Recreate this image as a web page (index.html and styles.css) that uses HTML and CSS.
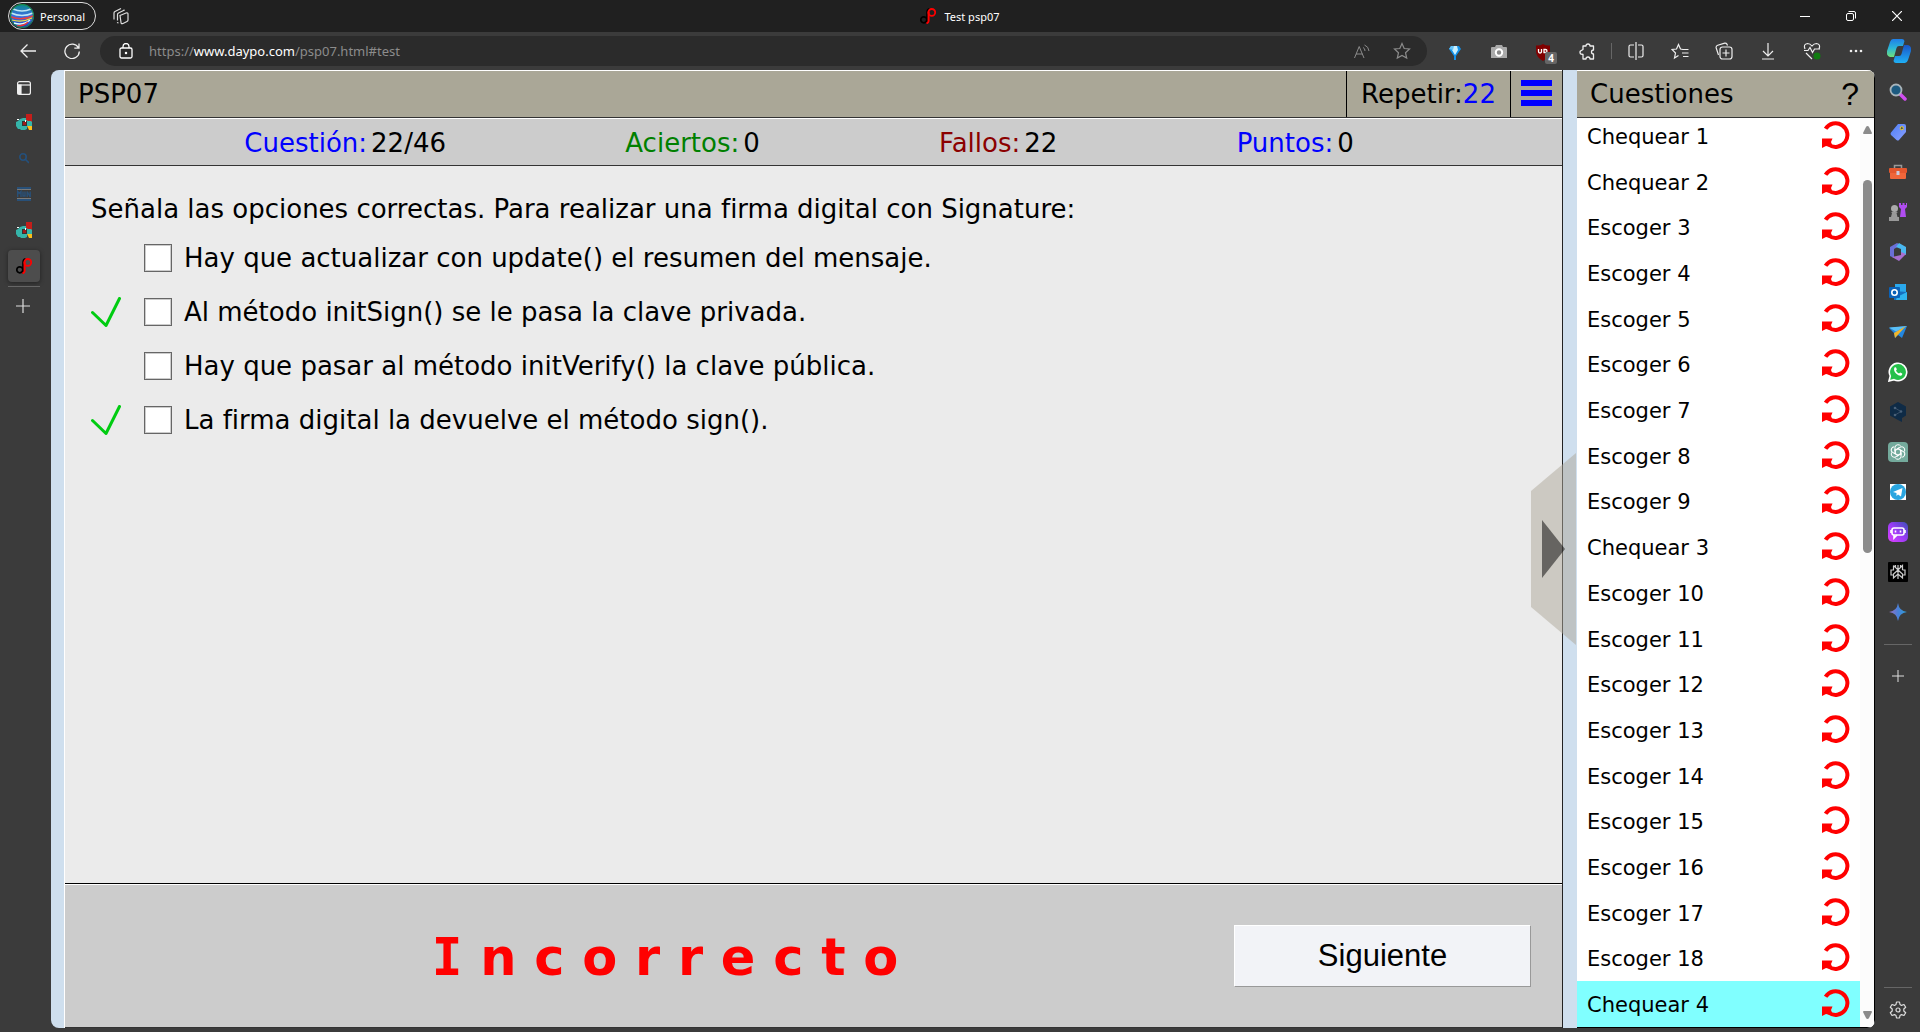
FILE: index.html
```html
<!DOCTYPE html>
<html lang="es">
<head>
<meta charset="utf-8">
<meta name="viewport" content="width=device-width, initial-scale=1">
<title>Test psp07</title>
<link rel="stylesheet" href="styles.css">
</head>
<body>
<svg class="defs" aria-hidden="true">
  <defs>
    <linearGradient id="avatar" x1="0" y1="0" x2="0" y2="1"><stop offset="0" stop-color="#0a8a8c"/><stop offset=".5" stop-color="#3c6fe0"/><stop offset="1" stop-color="#1c3cb8"/></linearGradient>
    <linearGradient id="cop1" x1="0" y1="0" x2="0" y2="1"><stop offset="0" stop-color="#1f7fe8"/><stop offset=".5" stop-color="#2bb6d8"/><stop offset="1" stop-color="#6fe07a"/></linearGradient>
    <linearGradient id="cop2" x1="0" y1="0" x2="0" y2="1"><stop offset="0" stop-color="#1a55c8"/><stop offset="1" stop-color="#1fb0f5"/></linearGradient>
    <linearGradient id="violet" x1="0" y1="1" x2="1" y2="0"><stop offset="0" stop-color="#e040ff"/><stop offset=".5" stop-color="#9a3cf5"/><stop offset="1" stop-color="#3a4fb8"/></linearGradient>
    <linearGradient id="tag" x1="0" y1="0" x2="1" y2="1"><stop offset="0" stop-color="#4f7ff5"/><stop offset="1" stop-color="#8aa0ff"/></linearGradient>
    <linearGradient id="gem" x1="0" y1="0" x2="1" y2="0"><stop offset="0" stop-color="#9a6fc0"/><stop offset=".5" stop-color="#4a80d8"/><stop offset="1" stop-color="#2aa0d8"/></linearGradient>
    <symbol id="redo" viewBox="0 0 28 28"><path d="M3.6 7.8A11.8 11.8 0 1 1 6.5 23.5" fill="none" stroke="#f00" stroke-width="4"/><path d="M0 17.500h10.500l-1.500 3.500 1.500 4-4 .5-2.500-.5-4 2z" fill="#f00"/></symbol>
    <symbol id="tick" viewBox="0 0 30 30"><path d="M1.5 15.5L15 28.5 28.5 1.5" fill="none" stroke="#0c1" stroke-width="3" stroke-linecap="round" stroke-linejoin="round"/></symbol>
    <symbol id="dp" viewBox="0 0 16 16"><circle cx="3.800" cy="11.800" r="3" fill="none" stroke="#000" stroke-width="1.700"/><path d="M7 15.500V4.500q0-3 2.500-3.700" fill="none" stroke="#000" stroke-width="1.600"/><circle cx="11.800" cy="4.400" r="3.400" fill="none" stroke="#f00" stroke-width="1.800"/><path d="M8.600 3.500V13q-.2 2-2.200 2.300" fill="none" stroke="#f00" stroke-width="2"/></symbol>
    <symbol id="cloud" viewBox="0 0 16 16"><path d="M10 0h6v8h-6z" fill="#c41e1a"/><path d="M11 12h5v4h-3z" fill="#fbbf1a"/><path d="M4 5l3-1h3v2h4l2 2v4h-5v3l-2 1H5l-1-1H2l-2-3V8l2-1z" fill="#35b5aa"/><path d="M10 0h6v7h-4l-2-1z" fill="#c41e1a"/><path d="M6 7h5v5H6z" fill="#333"/><path d="M7 8h3v3H7z" fill="#a01c1a"/><path d="M1 5h2v1H1zM9 6h1v2H9z" fill="#fff"/></symbol>
    <symbol id="plus" viewBox="0 0 14 14"><path d="M7 0v14M0 7h14" stroke="#ddd" stroke-width="1.2"/></symbol>
  </defs>
</svg>

<header class="titlebar">
  <button class="profile"><svg width="24" height="24" viewBox="0 0 24 24"><circle cx="12" cy="12" r="12" fill="url(#avatar)"/><g fill="none"><path d="M3 5q9 4 18 0M1 9q11 5 22 0" stroke="#bfe8f5" stroke-width="1.4"/><path d="M1 13q11 4 22-1" stroke="#e84040" stroke-width="1.5"/><path d="M2 16q10 3 20-2" stroke="#f0e040" stroke-width="1.3"/><path d="M4 19q9 3 16-3" stroke="#dff" stroke-width="1.4"/><path d="M7 22q7 0 11-4" stroke="#e33" stroke-width="1.3"/></g><circle cx="12" cy="12" r="11.5" fill="none" stroke="#178a3a"/></svg><span>Personal</span></button>
  <button class="icon workspaces" aria-label="Áreas de trabajo"><svg width="18" height="18" viewBox="0 0 18 18" fill="none" stroke="#ddd" stroke-width="1.2"><path d="M8 8.5l6-2.5q2-.5 2 1v6q0 1-1 1.5l-4 2q-2 .7-2-1z"/><path d="M5.5 13.500V7.500q0-1 1-1.500l6-3M5 15.500l1.500.5M2 12.500V6q0-1 1-1.500L9 1.500M12 4V2.500"/></svg></button>
  <div class="window-title"><svg width="16" height="16"><use href="#dp"/></svg><span>Test psp07</span></div>
  <div class="window-buttons">
    <button class="icon" aria-label="Minimizar"><svg width="10" height="10"><path d="M0 5.500h10" stroke="#fff"/></svg></button>
    <button class="icon" aria-label="Restaurar"><svg width="10" height="10" viewBox="0 0 10 10" fill="none" stroke="#fff"><rect x=".5" y="2.500" width="7" height="7" rx="1.500"/><path d="M2.500.5H8q1.500 0 1.500 1.500v5.500"/></svg></button>
    <button class="icon" aria-label="Cerrar"><svg width="10" height="10"><path d="M0 0l10 10M10 0L0 10" stroke="#fff" stroke-width="1.200"/></svg></button>
  </div>
</header>

<nav class="toolbar" aria-label="Navegador">
  <button class="icon back" aria-label="Atrás"><svg width="16" height="14" viewBox="0 0 16 14" fill="none" stroke="#eee" stroke-width="1.300"><path d="M7.500.5L1 7l6.500 6.500M1 7h15"/></svg></button>
  <button class="icon reload" aria-label="Actualizar"><svg width="16" height="16" viewBox="0 0 16 16" fill="none" stroke="#eee" stroke-width="1.300"><path d="M14.500 5A7.200 7.200 0 1 0 15.300 8.500M15 .5V5.200h-4.700"/></svg></button>
  <div class="address">
    <svg width="14" height="16" viewBox="0 0 14 16" fill="none" stroke="#fff" stroke-width="1.300"><rect x="1" y="5" width="12" height="10" rx="1.500"/><path d="M4 5V3.500a3 3 0 0 1 6 0V5"/><circle cx="7" cy="10" r=".6" fill="#fff"/></svg>
    <a class="url" href="#test">https://<b>www.daypo.com</b>/psp07.html#test</a>
    <button class="icon" aria-label="Leer en voz alta"><svg width="16" height="15" viewBox="0 0 16 15" fill="none" stroke="#8c8c8c"><path d="M.5 14L5.200 2.500 10 14M2 10h6.500M9 3.500q2 .8 2 3.500M10.500 1q4 1.500 4.500 6"/></svg></button>
    <button class="icon" aria-label="Favorito"><svg width="18" height="18" viewBox="0 0 18 18" fill="none" stroke="#8c8c8c" stroke-width="1.200"><path d="M9 1.500l2.200 5 5.300.5-4 3.700 1.200 5.400L9 13.400l-4.700 2.700 1.200-5.400L1.500 7l5.300-.5z"/></svg></button>
  </div>
  <div class="extensions">
    <button class="icon" aria-label="Extensión diamante"><svg width="12" height="15" viewBox="0 0 12 15"><path d="M2 1h8l2 3-5 7v4H5v-4L0 4z" fill="#1290e8"/><path d="M4 1h4l1 4-3 5-3-5z" fill="#c8f0ff"/><path d="M2 1h3L4 5 0 4z" fill="#65c4fa"/></svg></button>
    <button class="icon" aria-label="Captura"><svg width="16" height="14" viewBox="0 0 16 14"><path d="M1 2h3l1-2h6l1 2h3q1 0 1 1v10H0V3q0-1 1-1z" fill="#aaa"/><circle cx="8" cy="7.500" r="3.200" fill="#888" stroke="#fff" stroke-width="2"/></svg></button>
    <button class="icon badged" aria-label="Bloqueador"><svg width="16" height="17" viewBox="0 0 16 17"><path d="M8 0q3 2 7 1.500V7q0 6-7 10-7-4-7-10V1.500Q5 2 8 0z" fill="#800000"/><path d="M3.500 5v2.500q0 1.500 1.500 1.500t1.500-1.500V5M9 8.500v-3h1.500a1.500 1.500 0 0 1 0 3z" fill="none" stroke="#fff" stroke-width="1.300"/></svg><span class="badge">4</span></button>
    <button class="icon" aria-label="Extensiones"><svg width="16" height="18" viewBox="0 0 16 18" fill="none" stroke="#eee" stroke-width="1.300"><path d="M4 3h3q0-2 2-2t2 2h3.500v4q-2 0-2 2t2 2v5H11q0-2-2-2t-2 2H4v-4.500l-2.500-.7q-1-1.500 0-2.800L4 6.500z" stroke-linejoin="round"/></svg></button>
  </div>
  <div class="browser-tools">
    <button class="icon" aria-label="Pantalla dividida"><svg width="16" height="18" viewBox="0 0 16 18" fill="none" stroke="#eee" stroke-width="1.200"><path d="M6 3H2.500Q1 3 1 4.500v9Q1 15 2.500 15H6M10 3h3.500Q15 3 15 4.500v9q0 1.500-1.500 1.500H10M8 0v18"/></svg></button>
    <button class="icon" aria-label="Favoritos"><svg width="18" height="17" viewBox="0 0 18 17" fill="none" stroke="#eee" stroke-width="1.200"><path d="M12 6.500L9.500 6 7.500 1.500 5.500 6 1 6.500 4.500 10l-1 5 4-2.500M11 6.500h6.500M11 10h6.500M12 13.500h5.500"/></svg></button>
    <button class="icon" aria-label="Colecciones"><svg width="18" height="18" viewBox="0 0 18 18" fill="none" stroke="#eee" stroke-width="1.200"><rect x="5" y="5" width="12" height="12" rx="2.500"/><path d="M11 7.500v7M7.500 11h7M3.500 13L1.200 6q-.5-2 1.500-2.700l7-2.200q1.500-.3 2.200 1L12.500 3.500"/></svg></button>
    <button class="icon" aria-label="Descargas"><svg width="14" height="17" viewBox="0 0 14 17" fill="none" stroke="#eee" stroke-width="1.200"><path d="M7 0v13M2 8l5 5 5-5M1 16h12"/></svg></button>
    <button class="icon" aria-label="Rendimiento"><svg width="18" height="18" viewBox="0 0 18 18" fill="none" stroke="#eee" stroke-width="1.200"><path d="M2 7Q0 2 4.500 1.500 7 1.500 9 4q2-2.500 4.500-2.500Q18 2 16 7M1 8.500h4l2-3 2.500 5L11.500 7H17M3 11l6 6"/><circle cx="14" cy="14" r="3.500" fill="#107c10" stroke="none"/></svg></button>
    <button class="icon" aria-label="Más"><svg width="14" height="4"><g fill="#eee"><circle cx="2" cy="2" r="1.300"/><circle cx="7" cy="2" r="1.300"/><circle cx="12" cy="2" r="1.300"/></g></svg></button>
  </div>
  <button class="icon copilot" aria-label="Copilot"><svg width="24" height="24" viewBox="0 0 24 24"><path d="M6 0h9q2 0 2.500 2L16 7h-4q-2 0-2.500 2L7 18H3q-4-1-3-6L3 3q1-3 3-3z" fill="url(#cop1)"/><path d="M18 24H9q-2 0-2.500-2L8 17h4q2 0 2.500-2L17 6h4q4 1 3 6l-3 9q-1 3-3 3z" fill="url(#cop2)"/></svg></button>
</nav>

<div class="workspace">
  <nav class="tabs" aria-label="Pestañas">
    <button class="icon tab" aria-label="Panel de pestañas"><svg width="14" height="14" viewBox="0 0 14 14" fill="none" stroke="#eee" stroke-width="1.200"><rect x=".6" y=".6" width="12.800" height="12.800" rx="2"/><path d="M1 4h12"/><path d="M1 4h3v9H1z" fill="#eee"/></svg></button>
    <button class="icon tab" aria-label="Pestaña 1"><svg width="16" height="16"><use href="#cloud"/></svg></button>
    <button class="icon tab" aria-label="Pestaña 2"><svg width="10" height="11" fill="none" stroke="#24507c" stroke-width="1.600"><circle cx="4" cy="4" r="3.200"/><path d="M6.500 6.500L10 10"/></svg></button>
    <button class="icon tab" aria-label="Pestaña 3"><svg width="14" height="14" viewBox="0 0 14 14" fill="none"><path d="M0 2.500h14M0 11.500h14" stroke="#7a7a7a"/><path d="M0 1h14M0 13h14" stroke="#285078" stroke-width="2"/><path d="M.7 10V4.500l1.600 2L4 4.500V10M6 4.500V9h2V4.500M10.200 10V4.500l3 5.500V4.500" stroke="#285078" stroke-width="1.400"/></svg></button>
    <button class="icon tab" aria-label="Pestaña 4"><svg width="16" height="16"><use href="#cloud"/></svg></button>
    <button class="icon tab active" aria-label="Test psp07"><svg width="16" height="16"><use href="#dp"/></svg></button>
    <hr>
    <button class="icon new-tab" aria-label="Nueva pestaña"><svg width="14" height="14"><use href="#plus"/></svg></button>
  </nav>

  <div class="page">
    <main class="test">
      <div class="test-head">
        <h1>PSP07</h1>
        <button class="repeat">Repetir:<span>22</span></button>
        <button class="menu" aria-label="Menú"><i></i><i></i><i></i></button>
      </div>
      <div class="stats">
        <div class="blue">Cuestión:<b>22/46</b></div>
        <div class="green">Aciertos:<b>0</b></div>
        <div class="maroon">Fallos:<b>22</b></div>
        <div class="blue points">Puntos:<b>0</b></div>
      </div>
      <section class="question">
        <p>Señala las opciones correctas. Para realizar una firma digital con Signature:</p>
        <ul>
          <li><span class="mark"></span><input type="checkbox" id="o1"><label for="o1">Hay que actualizar con update() el resumen del mensaje.</label></li>
          <li><span class="mark"><svg width="30" height="30"><use href="#tick"/></svg></span><input type="checkbox" id="o2"><label for="o2">Al método initSign() se le pasa la clave privada.</label></li>
          <li><span class="mark"></span><input type="checkbox" id="o3"><label for="o3">Hay que pasar al método initVerify() la clave pública.</label></li>
          <li><span class="mark"><svg width="30" height="30"><use href="#tick"/></svg></span><input type="checkbox" id="o4"><label for="o4">La firma digital la devuelve el método sign().</label></li>
        </ul>
      </section>
      <footer class="result">
        <strong><span class="slab">I</span> n c o r r e c t o</strong>
        <button class="next">Siguiente</button>
      </footer>
      <button class="collapse" aria-label="Ocultar cuestiones"><svg width="45" height="192" viewBox="0 0 45 192"><path d="M0 38L45 0v192L0 154z" fill="#ada799" fill-opacity=".5"/><path d="M11 67l23 29-23 29z" fill-opacity=".5"/></svg></button>
    </main>

    <aside class="questions">
      <div class="questions-head"><h2>Cuestiones</h2><button class="help" aria-label="Ayuda">?</button></div>
      <div class="scroller">
        <ol>
          <li>Chequear 1<svg><use href="#redo"/></svg></li>
          <li>Chequear 2<svg><use href="#redo"/></svg></li>
          <li>Escoger 3<svg><use href="#redo"/></svg></li>
          <li>Escoger 4<svg><use href="#redo"/></svg></li>
          <li>Escoger 5<svg><use href="#redo"/></svg></li>
          <li>Escoger 6<svg><use href="#redo"/></svg></li>
          <li>Escoger 7<svg><use href="#redo"/></svg></li>
          <li>Escoger 8<svg><use href="#redo"/></svg></li>
          <li>Escoger 9<svg><use href="#redo"/></svg></li>
          <li>Chequear 3<svg><use href="#redo"/></svg></li>
          <li>Escoger 10<svg><use href="#redo"/></svg></li>
          <li>Escoger 11<svg><use href="#redo"/></svg></li>
          <li>Escoger 12<svg><use href="#redo"/></svg></li>
          <li>Escoger 13<svg><use href="#redo"/></svg></li>
          <li>Escoger 14<svg><use href="#redo"/></svg></li>
          <li>Escoger 15<svg><use href="#redo"/></svg></li>
          <li>Escoger 16<svg><use href="#redo"/></svg></li>
          <li>Escoger 17<svg><use href="#redo"/></svg></li>
          <li>Escoger 18<svg><use href="#redo"/></svg></li>
          <li class="current">Chequear 4<svg><use href="#redo"/></svg></li>
        </ol>
        <div class="scrollbar"><svg width="9" height="8"><path d="M4.500 0q1 0 1.500 1l3 6q0 1-1 1H1q-1 0-1-1l3-6q.5-1 1.500-1z" fill="#8b8b8b"/></svg><div class="track"><div class="thumb"></div></div><svg width="9" height="8"><path d="M4.500 8q1 0 1.500-1l3-6q0-1-1-1H1Q0 0 0 1l3 6q.5 1 1.500 1z" fill="#8b8b8b"/></svg></div>
      </div>
    </aside>
  </div>

  <nav class="sidebar" aria-label="Aplicaciones">
    <button class="icon" aria-label="Buscar"><svg width="18" height="18" viewBox="0 0 18 18"><path d="M10 10l6 6" stroke="#d04df0" stroke-width="3.500" stroke-linecap="round"/><circle cx="7" cy="7" r="5.500" fill="#1c5a80" stroke="#a8b4ba" stroke-width="1.800"/></svg></button>
    <button class="icon" aria-label="Compras"><svg width="18" height="18" viewBox="0 0 18 18"><path d="M9 1h6q2 0 2 2v6l-7 8q-1 1-2.500 0L2 12q-1-1.500 0-2.500z" fill="url(#tag)"/><circle cx="12.800" cy="5.200" r="1.600" fill="#456" stroke="#f5d020"/></svg></button>
    <button class="icon" aria-label="Herramientas"><svg width="18" height="16" viewBox="0 0 18 16"><path d="M5.500 4V1.500h7V4" fill="none" stroke="#999" stroke-width="1.500"/><rect y="4" width="18" height="5" rx="1" fill="#e4572e"/><path d="M1 9h16v5q0 1-1 1H2q-1 0-1-1z" fill="#f0663a"/><rect x="7.500" y="7" width="3" height="4" fill="#ccd"/></svg></button>
    <button class="icon" aria-label="Juegos"><svg width="18" height="18" viewBox="0 0 18 18"><path d="M10 0h2v2h1.500V0h2v2H17V0h1v4l-2 2 1 8h-6l1-8-2-2z" fill="#b04df0"/><circle cx="5.500" cy="5.500" r="3.500" fill="#aaa"/><path d="M2 9h7l-1.500 1 1 4H10v4H0v-4h2l1-4z" fill="#999"/></svg></button>
    <button class="icon" aria-label="Microsoft 365"><svg width="18" height="18" viewBox="0 0 18 18"><path d="M8 0L1 4v9l4 2V6l7-4z" fill="#6a6fd8"/><path d="M10 0l7 4v8l-5-2V6L7 4z" fill="#4ab8f0"/><path d="M17 11l-7 7-7-4 9-2V9z" fill="#a86fd0"/></svg></button>
    <button class="icon" aria-label="Outlook"><svg width="18" height="18" viewBox="0 0 18 18"><path d="M6 1h11v9H6z" fill="#2aa8ec"/><path d="M5 8l13 1v8H5z" fill="#1570c0"/><path d="M8 14l10-5v8H7z" fill="#2fb4f0"/><rect y="4" width="11" height="11" rx="1" fill="#0a62b8"/><circle cx="5.500" cy="9.500" r="2.700" fill="none" stroke="#fff" stroke-width="1.600"/></svg></button>
    <button class="icon" aria-label="Drop"><svg width="18" height="14" viewBox="0 0 18 14"><path d="M0 3L18 1l-5 12-4-3-3 3-1-5z" fill="#2286e0"/><path d="M0 2.500L18 1 7 6.500z" fill="#5ac0f8"/><path d="M5 8l12-7L6 13z" fill="#f2b62a"/></svg></button>
    <button class="icon" aria-label="WhatsApp"><svg width="20" height="20" viewBox="0 0 20 20"><path d="M1 19l1.300-5A8.700 8.700 0 1 1 6 17.700z" fill="#25c04a" stroke="#fff" stroke-width="1.600"/><path d="M6.500 5.500q1.500-1 2 1l.3 1-.8 1.200q1.200 2 3 2.800l1.200-1 2 1q.5 1.500-1.200 2.200-2 .5-5-2.200-3-3.300-1.500-6z" fill="#fff"/></svg></button>
    <button class="icon" aria-label="DeepL"><svg width="18" height="20" viewBox="0 0 18 20"><path d="M9 0l8 4.500v9L13 16v4l-4-2-8-4.500v-9z" fill="#0f2b46"/><path d="M6 6l6 3.500L6 13" fill="none" stroke="#3a5068"/><g fill="#496078"><circle cx="6" cy="6" r="1.300"/><circle cx="12" cy="9.500" r="1.300"/><circle cx="6" cy="13" r="1.300"/></g></svg></button>
    <button class="icon" aria-label="ChatGPT"><svg width="20" height="20" viewBox="0 0 20 20"><path d="M4 0h12q4 0 4 4v16H4q-4 0-4-4V4q0-4 4-4z" fill="#74aa9c"/><g fill="none" stroke="#fff"><path id="k" d="M7 9V5.500q0-2.500 2.800-2.800 2 0 3 1.500M7.300 8.500l3-1.800 4 2.300"/><use href="#k" transform="rotate(60 10 10)"/><use href="#k" transform="rotate(120 10 10)"/><use href="#k" transform="rotate(180 10 10)"/><use href="#k" transform="rotate(240 10 10)"/><use href="#k" transform="rotate(300 10 10)"/></g></svg></button>
    <button class="icon" aria-label="Telegram"><svg width="16" height="16" viewBox="0 0 16 16"><path d="M0 0h16v16H0z" fill="#fff"/><circle cx="8" cy="8" r="8" fill="#29a5e0"/><path d="M3 8l9.500-4-1.500 8.500-3-2-1.500 1.500V9z" fill="#fff"/></svg></button>
    <button class="icon" aria-label="Poe"><svg width="20" height="20" viewBox="0 0 20 20"><rect width="20" height="20" rx="5" fill="url(#violet)"/><rect x="4" y="6" width="12" height="7" rx="2" fill="none" stroke="#fff" stroke-width="1.600"/><path d="M3 8v3M17 8v3M7.500 8.500v2M12.500 8.500v2M6 13v3l3-3" stroke="#fff" stroke-width="1.600" fill="none"/></svg></button>
    <button class="icon" aria-label="Perplexity"><svg width="20" height="20" viewBox="0 0 20 20"><rect width="20" height="20" rx="1" fill="#000"/><path d="M10 3v14M5.500 3.500L10 8l4.500-4.500V8M5.500 3.500V8H3v5h2.500M14.500 8H17v5h-2.500M10 8l-4.500 4v4L10 12l4.500 4v-4L10 8M7.500 3v2M12.500 3v2" fill="none" stroke="#ccc" stroke-width="1.200"/></svg></button>
    <button class="icon" aria-label="Gemini"><svg width="18" height="18" viewBox="0 0 18 18"><path d="M9 0q1 8 9 9-8 1-9 9-1-8-9-9 8-1 9-9z" fill="url(#gem)"/></svg></button>
    <hr>
    <button class="icon add" aria-label="Personalizar"><svg width="12" height="12" viewBox="0 0 14 14"><use href="#plus"/></svg></button>
    <hr class="last">
    <button class="icon settings" aria-label="Configuración"><svg width="18" height="18" viewBox="0 0 18 18" fill="none" stroke="#ddd" stroke-width="1.200"><path d="M7.500 1h3l.5 2.500 1.500.9 2.500-.9 1.700 2.700L14.800 8v2l1.900 1.800-1.700 2.700-2.500-.9-1.500.9-.5 2.500h-3L7 14.500l-1.500-.9-2.500.9-1.700-2.700L3.200 10V8L1.300 6.200 3 3.500l2.500.9L7 3.500z" stroke-linejoin="round"/><circle cx="9" cy="9" r="2"/></svg></button>
  </nav>
</div>
</body>
</html>
```
FILE: styles.css
```css
* { box-sizing: border-box; }

body {
  margin: 0;
  height: 100vh;
  display: flex;
  flex-direction: column;
  overflow: hidden;
  background: #3b3b3b;
  color: #000;
  font-family: Verdana, "DejaVu Sans", sans-serif;
  font-size: 26px;
}

.defs { position: absolute; width: 0; height: 0; }

svg { display: block; flex: none; }

button {
  margin: 0;
  padding: 0;
  border: 0;
  background: none;
  color: inherit;
  font: inherit;
}

h1, h2, p, ul, ol { margin: 0; padding: 0; font-size: inherit; font-weight: normal; list-style: none; }

hr { width: 32px; height: 1px; margin: 0; border: 0; background: #666; }

.icon { display: flex; align-items: center; justify-content: center; }

/* Title bar */
.titlebar {
  flex: none;
  height: 32px;
  display: grid;
  grid-template-columns: 96px 46px 1fr 142px;
  align-items: center;
  background: #202020;
  color: #fff;
  font: 11px "Segoe UI", "Noto Sans", sans-serif;
}
.profile {
  height: 28px;
  margin-left: 8px;
  padding-left: 1px;
  display: flex;
  align-items: center;
  gap: 6px;
  border: 1px solid #ddd;
  border-radius: 14px;
}
.workspaces { width: 50px; }
.window-title { display: flex; align-items: center; justify-content: center; gap: 8px; }
.window-buttons { padding-left: 4px; display: grid; grid-template-columns: repeat(3, 46px); }

/* Toolbar */
.toolbar {
  flex: none;
  height: 38px;
  display: flex;
  align-items: center;
  font: 13px "Segoe UI", "Noto Sans", sans-serif;
}
.back { width: 56px; }
.reload { width: 32px; }
.address {
  flex: 1;
  height: 30px;
  margin-left: 12px;
  padding: 0 5px 0 19px;
  display: flex;
  align-items: center;
  border-radius: 15px;
  background: #2b2b2b;
}
.address .icon { width: 40px; }
.url { flex: 1; margin-left: 16px; color: #8c8c8c; text-decoration: none; }
.url b { color: #fff; font-weight: normal; }
.extensions { margin-left: 6px; padding-right: 2px; display: grid; grid-template-columns: repeat(4, 44px); height: 16px; border-right: 1px solid #666; }
.badged { position: relative; }
.badge {
  position: absolute;
  left: 24px;
  top: 9px;
  width: 12px;
  border-radius: 2px;
  background: #666;
  color: #fff;
  font: bold 10px/12px "Noto Sans", sans-serif;
}
.browser-tools { margin-left: 2px; display: grid; grid-template-columns: repeat(6, 44px); }
.copilot { width: 42px; }

/* Body row */
.workspace { flex: 1; min-height: 0; display: flex; }

.tabs { width: 51px; padding: 0 5px 0 8px; display: flex; flex-direction: column; }
.tab { width: 32px; height: 32px; margin-top: 4px; }
.tab:first-child { height: 28px; }
.tabs .active { border-radius: 4px; background: #4d4d4d; box-shadow: 0 1px 4px #222; }
.tabs hr { margin-top: 4px; }
.new-tab { width: 30px; height: 38px; }

.page {
  flex: 1;
  min-width: 0;
  margin-bottom: 4px;
  padding-left: 13px;
  display: flex;
  gap: 14px;
  border-radius: 8px;
  overflow: hidden;
  background: #cfdfee;
}

.test {
  position: relative;
  flex: 1;
  min-width: 0;
  display: flex;
  flex-direction: column;
  border-left: 1px solid #fff;
  border-right: 1px solid #222;
  background: #ebebeb;
}
.test-head, .questions-head {
  flex: none;
  height: 48px;
  display: flex;
  align-items: stretch;
  border-top: 1px solid #fff;
  border-bottom: 1px solid #333;
  background: #aaa797;
  line-height: 46px;
}
.test-head h1 { flex: 1; padding-left: 13px; }
.repeat { width: 164px; border-left: 1px solid #000; }
.repeat span { color: #00f; }
.menu {
  width: 52px;
  padding-bottom: 2px;
  display: flex;
  flex-direction: column;
  align-items: center;
  justify-content: center;
  gap: 4px;
  border-left: 1px solid #000;
}
.menu i { width: 31px; height: 6px; background: #00f; }

.stats {
  flex: none;
  height: 48px;
  display: flex;
  justify-content: space-evenly;
  border-top: 1px solid #fff;
  border-bottom: 1px solid #333;
  background: #ccc;
  line-height: 49px;
}
.stats b { margin-left: 4px; color: #000; font-weight: normal; }
.points { min-width: 146px; }
.blue { color: #00f; }
.green { color: #008000; }
.maroon { color: #8b0000; }

.question { flex: 1; padding: 26px; }
.question p { line-height: 34px; }
.question ul { padding-top: 5px; }
.question li { height: 54px; display: flex; align-items: center; }
.question .mark { width: 53px; }
.question input {
  appearance: none;
  width: 28px;
  height: 28px;
  margin: 0 12px 0 0;
  border: 1px solid #666;
  background: #fff;
  box-shadow: inset 0 0 0 1px #ccc;
}

.result {
  flex: none;
  height: 145px;
  padding: 0 31px;
  display: flex;
  align-items: center;
  border-top: 1px solid #000;
  border-bottom: 1px solid #333;
  background: #ccc;
  box-shadow: inset 0 1px #fff;
}
.result strong { flex: 1; padding-top: 4px; text-align: center; color: #f00; font-size: 51px; }
.slab { font-family: "DejaVu Sans Mono", monospace; }
.next {
  width: 297px;
  height: 62px;
  border: 1px solid;
  border-color: #fff #999 #999 #fff;
  background: #f2f3f7;
  font: 31px Arial, "Liberation Sans", sans-serif;
}

/* Handle that overlaps the gap between both panels */
.collapse { position: absolute; right: -14px; top: 40%; }

.questions {
  width: 298px;
  display: flex;
  flex-direction: column;
  border-right: 1px solid #000;
  border-bottom: 1px solid #000;
  background: #fff;
}
.questions-head { padding: 0 15px 0 13px; justify-content: space-between; }
.help { font: 32px/46px Arial, "Liberation Sans", sans-serif; }
.scroller { flex: 1; min-height: 0; display: flex; overflow: hidden; }
.scroller ol {
  flex: 1;
  margin-top: -5px;
  display: grid;
  grid-template-rows: repeat(20, 1fr);
  font-size: 21px;
}
.scroller li { padding: 2px 10px 0; display: flex; align-items: center; justify-content: space-between; }
.scroller li svg { width: 28px; height: 28px; margin-bottom: 4px; }
.current { background: #80ffff; }
.scrollbar {
  width: 14px;
  padding: 8px 0;
  display: flex;
  flex-direction: column;
  align-items: center;
  background: #fcfcfc;
}
.track { flex: 1; padding-top: 46px; }
.thumb { width: 9px; height: 43%; min-height: 373px; border-radius: 5px; background: #8b8b8b; }

/* App sidebar */
.sidebar { width: 45px; padding-top: 2px; display: flex; flex-direction: column; align-items: center; }
.sidebar .icon { width: 40px; height: 40px; }
.sidebar hr { width: 28px; margin-top: 12px; }
.sidebar .add { height: 62px; }
.sidebar hr.last { margin-top: auto; }
.sidebar .settings { height: 44px; }
```
